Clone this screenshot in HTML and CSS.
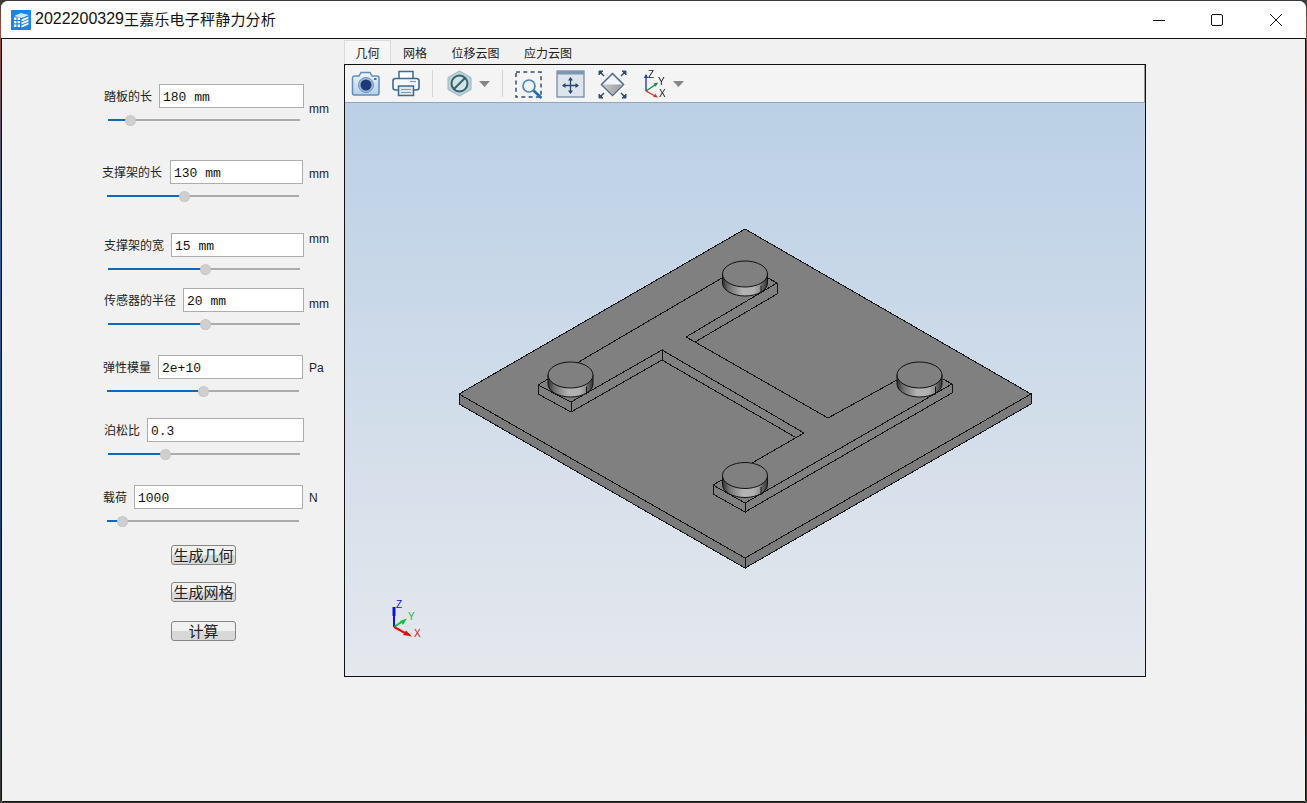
FILE: index.html
```html
<!DOCTYPE html>
<html lang="zh-CN">
<head>
<meta charset="utf-8">
<title>2022200329王嘉乐电子秤静力分析</title>
<link rel="stylesheet" href="styles.css">
</head>
<body>
<div class="window">
  <header class="titlebar">
    <svg class="logo" width="20" height="20" viewBox="0 0 20 20">
      <rect width="20" height="20" fill="#1b84e6"/>
      <path d="M3 6 L10 3 L18 5 L11 8 Z" fill="#cfe6fb"/>
      <path d="M3 7.500 H9 V17 H3 Z" fill="#fff"/>
      <path d="M3 10.500 H9 M3 13.800 H9 M6 7.500 V17" stroke="#1b84e6" stroke-width="1.200" fill="none"/>
      <path d="M10.500 9.500 L17.500 6.500 V8.500 L10.500 11.500 Z M10.500 12.500 L17.500 9.500 V11.500 L10.500 14.500 Z M10.500 15.500 L17.500 12.500 V14.500 L10.500 17.500 Z" fill="#fff"/>
    </svg>
    <h1 class="title"><span class="title-num">2022200329</span><span class="title-cjk">王嘉乐电子秤静力分析</span></h1>
    <div class="controls">
      <div class="ctl"><svg width="14" height="14" viewBox="0 0 14 14"><path d="M1 7.500 H13" stroke="#111" fill="none"/></svg></div>
      <div class="ctl"><svg width="14" height="14" viewBox="0 0 14 14"><rect x="1.500" y="1.500" width="11" height="11" rx="1.500" stroke="#111" fill="none"/></svg></div>
      <div class="ctl"><svg width="14" height="14" viewBox="0 0 14 14"><path d="M1 1 L13 13 M13 1 L1 13" stroke="#111" fill="none"/></svg></div>
    </div>
  </header>

  <main class="main">
    <section class="panel">
      <div class="row r1"><label class="lbl">踏板的长</label><input class="field" value="180 mm"><span class="unit u1">mm</span></div>
      <div class="slider sl-a"><i class="fill" style="width:22px"></i><i class="thumb"></i><i class="rest"></i></div>

      <div class="row r2"><label class="lbl">支撑架的长</label><input class="field" value="130 mm"><span class="unit u2">mm</span></div>
      <div class="slider sl-b"><i class="fill" style="width:77px"></i><i class="thumb"></i><i class="rest"></i></div>

      <div class="row r3"><label class="lbl">支撑架的宽</label><input class="field" value="15 mm"><span class="unit u3">mm</span></div>
      <div class="slider sl-a"><i class="fill" style="width:97px"></i><i class="thumb"></i><i class="rest"></i></div>

      <div class="row r4"><label class="lbl">传感器的半径</label><input class="field" value="20 mm"><span class="unit u4">mm</span></div>
      <div class="slider sl-a"><i class="fill" style="width:97px"></i><i class="thumb"></i><i class="rest"></i></div>

      <div class="row r5"><label class="lbl">弹性模量</label><input class="field" value="2e+10"><span class="unit u5">Pa</span></div>
      <div class="slider sl-b"><i class="fill" style="width:96px"></i><i class="thumb"></i><i class="rest"></i></div>

      <div class="row r6"><label class="lbl">泊松比</label><input class="field" value="0.3"></div>
      <div class="slider sl-a"><i class="fill" style="width:57px"></i><i class="thumb"></i><i class="rest"></i></div>

      <div class="row r7"><label class="lbl">载荷</label><input class="field" value="1000"><span class="unit u5">N</span></div>
      <div class="slider sl-b"><i class="fill" style="width:15px"></i><i class="thumb"></i><i class="rest"></i></div>

      <button class="btn b1">生成几何</button>
      <button class="btn b2">生成网格</button>
      <button class="btn b3">计算</button>
    </section>

    <section class="viewer">
      <nav class="tabs">
        <span class="tab tab-on">几何</span>
        <span class="tab">网格</span>
        <span class="tab">位移云图</span>
        <span class="tab">应力云图</span>
      </nav>
      <div class="pane">
        <div class="toolbar">
          <svg class="ico i-cam" width="30" height="26" viewBox="0 0 30 26">
            <defs><linearGradient id="camg" x1="0" y1="0" x2="0" y2="1"><stop offset="0" stop-color="#eef4fa"/><stop offset="1" stop-color="#b9cfe6"/></linearGradient></defs>
            <path d="M1.500 7 a2 2 0 0 1 2-2 H8 L10 1.500 H19 L21 5 H26 a2 2 0 0 1 2 2 V22 a2 2 0 0 1-2 2 H3.500 a2 2 0 0 1-2-2 Z" fill="url(#camg)" stroke="#5f8dbb" stroke-width="1.500"/>
            <circle cx="15" cy="14" r="7.500" fill="#9dbad8" stroke="#6f95bd"/>
            <circle cx="15" cy="14" r="5.500" fill="#1d3a78"/>
            <rect x="23" y="7" width="2.500" height="2" fill="#49709c"/>
          </svg>
          <svg class="ico i-prn" width="28" height="27" viewBox="0 0 28 27">
            <path d="M7 9 V1.500 H21 V9" fill="#fff" stroke="#3f6a8f" stroke-width="1.500"/>
            <rect x="1" y="8.500" width="26" height="11.500" rx="2.500" fill="#f4f8fb" stroke="#3f6a8f" stroke-width="1.600"/>
            <path d="M18 11.500 H24" stroke="#7f9cb4" stroke-width="1.200"/>
            <rect x="6.500" y="16" width="15" height="9.500" fill="#dfe7ee" stroke="#3f6a8f" stroke-width="1.500"/>
            <path d="M9 19.500 H19 M9 22.500 H19" stroke="#7f9cb4"/>
          </svg>
          <span class="sep"></span>
          <svg class="ico i-no" width="25" height="27" viewBox="0 0 25 27">
            <path d="M12.500 1 L24 7.500 V19.500 L12.500 26 L1 19.500 V7.500 Z" fill="#bdd1d6" stroke="#9ab3ba"/>
            <circle cx="12.500" cy="13.500" r="8" fill="#d5e2e5" stroke="#2f626c" stroke-width="2"/>
            <path d="M7 19 L18 8" stroke="#2f626c" stroke-width="2"/>
          </svg>
          <svg class="ico i-drop1" width="11" height="6" viewBox="0 0 11 6"><path d="M0 0 H11 L5.500 6 Z" fill="#858585"/></svg>
          <span class="sep sep2"></span>
          <svg class="ico i-zoom" width="28" height="28" viewBox="0 0 28 28">
            <rect x="1" y="1" width="25" height="25" fill="none" stroke="#2f4f7c" stroke-width="1.500" stroke-dasharray="4 3.300"/>
            <circle cx="14" cy="15" r="6" fill="#eef4fa" stroke="#4a87bb" stroke-width="1.700"/>
            <path d="M18.500 19.500 L26.500 27" stroke="#1d70b5" stroke-width="2.600"/>
          </svg>
          <svg class="ico i-pan" width="29" height="28" viewBox="0 0 29 28">
            <rect x="1" y="1" width="27" height="26" fill="#dde4ec" stroke="#6a84a2" stroke-width="1.200"/>
            <rect x="1" y="1" width="27" height="3.500" fill="#7d96b1"/>
            <path d="M14.500 8 V23 M7 15.500 H22" stroke="#26466f" stroke-width="1.300"/>
            <path d="M14.500 7 L12 10.500 H17 Z M14.500 24 L12 20.500 H17 Z M6 15.500 L9.500 13 V18 Z M23 15.500 L19.500 13 V18 Z" fill="#26466f"/>
          </svg>
          <svg class="ico i-fit" width="29" height="29" viewBox="0 0 29 29">
            <defs><linearGradient id="fitg" x1="0" y1="0" x2="1" y2="0"><stop offset="0" stop-color="#c8c8c8"/><stop offset="1" stop-color="#9c9c9c"/></linearGradient></defs>
            <path d="M14.500 3.500 L25.500 14.500 L14.500 25.500 L3.500 14.500 Z" fill="#f2f5f8" stroke="#4a6a8d" stroke-width="1.500"/>
            <path d="M5 14.500 H24 L14.500 24.500 Z" fill="url(#fitg)"/>
            <path d="M1 1 L5 1 L1 5 Z M28 1 L24 1 L28 5 Z M1 28 L5 28 L1 24 Z M28 28 L24 28 L28 24 Z" fill="#2c4f7c" stroke="#2c4f7c"/>
            <path d="M2 2 L6 6 M27 2 L23 6 M2 27 L6 23 M27 27 L23 23" stroke="#2c4f7c" stroke-width="1.500"/>
          </svg>
          <svg class="ico i-axes" width="28" height="28" viewBox="0 0 28 28">
            <path d="M5 21 V7" stroke="#1c3fc4" stroke-width="1.400"/>
            <path d="M5 4 L2.800 8 H7.200 Z" fill="#1c3fc4"/>
            <path d="M5 21 L14 15" stroke="#16893c" stroke-width="1.400"/>
            <path d="M17 12.500 L12.500 13.500 L14.800 16.800 Z" fill="#16893c"/>
            <path d="M5 21 L14 26" stroke="#e0282a" stroke-width="1.400"/>
            <path d="M17 27.500 L12.300 27 L14.200 23.700 Z" fill="#e0282a"/>
            <text class="ax-t" x="7" y="8">Z</text>
            <text class="ax-t" x="17" y="15">Y</text>
            <text class="ax-t" x="18" y="27">X</text>
          </svg>
          <svg class="ico i-drop2" width="11" height="6" viewBox="0 0 11 6"><path d="M0 0 H11 L5.500 6 Z" fill="#858585"/></svg>
        </div>
        <div class="view">
          <svg class="scene" width="800" height="573" viewBox="345 103 800 573">
            <defs>
              <linearGradient id="cylg" x1="0" y1="0" x2="1" y2="0">
                <stop offset="0" stop-color="#2f2f2f"/>
                <stop offset=".14" stop-color="#6f6f6f"/>
                <stop offset=".45" stop-color="#b4b4b4"/>
                <stop offset=".7" stop-color="#b0b0b0"/>
                <stop offset=".86" stop-color="#8a8a8a"/>
                <stop offset=".87" stop-color="#6a6a6a"/>
                <stop offset="1" stop-color="#333"/>
              </linearGradient>
              <g id="cyl">
                <path d="M-22.500 0 V9 A22.500 13 0 0 0 22.500 9 V0 Z" fill="url(#cylg)" stroke="#111"/>
                <path d="M16 11.500 V19.500" stroke="#111" fill="none"/>
                <ellipse cx="0" cy="0" rx="22.500" ry="13" fill="#808080" stroke="#111"/>
              </g>
            </defs>
            <g class="edges">
              <path d="M745 229 L1031 394 L745 558 L459 394 Z" fill="#808080"/>
              <path d="M459 394 L745 558 V568 L459 404 Z" fill="#7b7b7b"/>
              <path d="M745 558 L1031 394 V404 L745 568 Z" fill="#7b7b7b"/>
              <path d="M722 278 L577 363"/>
              <path d="M548 379 L538 385 L571 402 L662 350 V360 L571 412 L538 394 V385"/>
              <path d="M571 402 V412"/>
              <path d="M662 350 L804 433 L752 463"/>
              <path d="M662 360 L795 437"/>
              <path d="M722 480 L713 485 L745 503 L952 384 L943 379"/>
              <path d="M713 485 V494 L745 512 V503"/>
              <path d="M745 512 L952 393 V384"/>
              <path d="M768 278 L777 283 V294 L695 342 L686 337 L777 283"/>
              <path d="M695 342 L828 418 L897 380"/>
            </g>
            <use href="#cyl" x="745" y="274"/>
            <use href="#cyl" x="570.500" y="375"/>
            <use href="#cyl" x="919.500" y="375"/>
            <use href="#cyl" x="745" y="475.500"/>
            <g class="triad">
              <path d="M394 627 V610" stroke="#1010e0" stroke-width="2"/>
              <path d="M392.500 607 H395.500 V616 H392.500 Z" fill="#1010e0"/>
              <path d="M394 627 L403 621" stroke="#10c040" stroke-width="2"/>
              <path d="M407 618.500 L400 621 L403 625 Z" fill="#10c040"/>
              <path d="M394 627 L406 633.500" stroke="#e01010" stroke-width="2"/>
              <path d="M412 636.500 L403 635 L406 630.500 Z" fill="#e01010"/>
              <text class="tri-t tz" x="396" y="608">Z</text>
              <text class="tri-t ty" x="408" y="620">Y</text>
              <text class="tri-t tx" x="414" y="637">X</text>
            </g>
          </svg>
        </div>
      </div>
    </section>
  </main>
</div>
</body>
</html>
```

FILE: styles.css
```css
* { box-sizing: border-box; }

html, body { margin: 0; padding: 0; height: 100%; overflow: hidden; }

body {
  background: linear-gradient(180deg, #3a3a3a 0, #a04a3c 3%, #8a4a44 6%, #2c5f98 30%, #1f3f6c 70%, #3a3a30 100%);
  padding: 1px;
  font-family: "Noto Sans CJK SC", "Noto Sans", sans-serif;
  color: #222;
}

.window {
  width: 1305px;
  height: 801px;
  display: flex;
  flex-direction: column;
  border-radius: 7px 7px 2px 2px;
  overflow: hidden;
  background: #f1f1f1;
}

.titlebar {
  flex: none;
  height: 37px;
  background: #fff;
  display: flex;
  align-items: center;
  padding-left: 9px;
  padding-right: 1px;
  border-left: 1px solid #fff;
}

.logo { flex: none; margin-right: 4px; }

.title {
  margin: 0 0 2px;
  font-weight: 400;
  color: #111;
  white-space: nowrap;
  line-height: 20px;
  display: flex;
  align-items: center;
}

.title-num { font-family: "Liberation Sans", sans-serif; font-size: 16px; }
.title-cjk { font-family: "Noto Sans CJK SC", sans-serif; font-size: 15px; letter-spacing: .2px; }

.controls { margin-left: auto; display: flex; }

.ctl {
  width: 58.5px;
  height: 37px;
  display: flex;
  align-items: center;
  justify-content: center;
}

.main {
  flex: 1;
  min-height: 0;
  display: flex;
  border: 1px solid #111;
  background: #f1f1f1;
}

.panel { flex: none; width: 342px; display: flex; flex-direction: column; align-items: flex-start; }

.row {
  display: grid;
  height: 24px;
  grid-template-rows: 24px;
  align-items: center;
  flex: none;
}

.r1 { margin-top: 45px; margin-left: 102px; grid-template-columns: 55px 145px auto; }
.r2 { margin-top: 39px; margin-left: 100px; grid-template-columns: 68px 133px auto; }
.r3 { margin-top: 36px; margin-left: 102px; grid-template-columns: 67px 133px auto; }
.r4 { margin-top: 18px; margin-left: 102px; grid-template-columns: 79px 121px auto; }
.r5 { margin-top: 30px; margin-left: 101px; grid-template-columns: 55px 145px auto; }
.r6 { margin-top: 26px; margin-left: 102px; grid-template-columns: 43px 157px auto; }
.r7 { margin-top: 30px; margin-left: 101px; grid-template-columns: 31px 169px auto; }

.lbl { font-size: 12px; line-height: 16px; color: #222; white-space: nowrap; }

.field {
  width: 100%;
  height: 24px;
  border: 1px solid #adadad;
  background: #fff;
  padding: 2px 0 0 3px;
  margin: 0;
  outline: none;
  border-radius: 0;
  font-family: "Liberation Mono", monospace;
  font-size: 13px;
  color: #111;
}

.unit {
  align-self: start;
  margin-left: 5px;
  font-family: "Liberation Sans", sans-serif;
  font-size: 12px;
  line-height: 14px;
  color: #222;
}

.u1 { margin-top: 18px; }
.u2 { margin-top: 7px; margin-left: 6px; }
.u3 { margin-top: -1px; }
.u4 { margin-top: 9px; }
.u5 { margin-top: 6px; margin-left: 6px; }

.slider {
  flex: none;
  width: 192px;
  height: 2px;
  margin-top: 11px;
  display: flex;
  align-items: center;
}

.sl-a { margin-left: 106px; }
.sl-b { margin-left: 105px; }

.fill { flex: none; height: 2px; background: #1168b8; }
.rest { flex: 1; height: 2px; background: #ababab; }

.thumb {
  flex: none;
  position: relative;
  z-index: 1;
  width: 11px;
  height: 11px;
  margin: 0 -5.5px;
  border-radius: 50%;
  background: #cfcfcf;
  border: 1px dotted #bdbdbd;
}

.btn {
  flex: none;
  width: 65px;
  height: 20px;
  margin-left: 169px;
  padding: 0;
  border: 1px solid #858585;
  border-radius: 3px;
  background: linear-gradient(180deg, #f1f1f1 0, #f1f1f1 52%, #d8d8d8 52%, #d8d8d8 100%);
  font-family: "Noto Sans CJK SC", sans-serif;
  font-size: 15px;
  line-height: 18px;
  color: #222;
}

.b1 { margin-top: 23px; }
.b2 { margin-top: 17px; }
.b3 { margin-top: 19px; }

.viewer { flex: none; width: 802px; height: 638px; display: flex; flex-direction: column; padding-top: 1px; }

.tabs { flex: none; height: 24px; display: flex; font-size: 12px; }

.tab {
  display: flex;
  align-items: center;
  justify-content: center;
  padding-top: 1px;
  line-height: 16px;
  color: #222;
  padding-left: 12px;
  padding-right: 12.5px;
}

.tab-on {
  width: 47px;
  padding-left: 0;
  padding-right: 0;
  background: #f5f5f5;
  border: 1px solid #dadada;
  border-bottom: none;
}

.pane {
  flex: none;
  height: 613px;
  border: 1px solid #111;
  display: flex;
  flex-direction: column;
}

.toolbar {
  flex: none;
  height: 38px;
  display: flex;
  align-items: center;
  padding-left: 6px;
  background: #f4f4f4;
  border-bottom: 1px solid #8fa6c0;
  border-right: 1px solid #9a9a9a;
}

.ico { flex: none; display: block; filter: blur(.35px); }
.i-cam { margin-right: 11px; }
.i-prn { margin-right: 12px; }
.sep { flex: none; width: 1px; height: 27px; background: #d4d4d4; }
.i-no { margin-left: 14px; margin-right: 7px; }
.i-drop1 { margin-right: 12px; }
.sep2 { margin-right: 12px; }
.i-zoom { margin-right: 13px; margin-top: 2px; }
.i-pan { margin-right: 13px; margin-top: 1px; }
.i-fit { margin-right: 14px; margin-top: 1px; }
.i-axes { margin-right: 4px; }

.ax-t { font-family: "Liberation Sans", sans-serif; font-size: 10px; fill: #222; }

.view {
  flex: 1;
  min-height: 0;
  background: linear-gradient(180deg, #bbd0e6 0, #e5e8ed 100%);
}

.scene { display: block; }

.edges path { stroke: #151515; stroke-width: 1; shape-rendering: crispEdges; }
.edges path:not([fill]) { fill: none; }

.tri-t { font-family: "Liberation Sans", sans-serif; font-size: 10px; }
.tz { fill: #1010e0; }
.ty { fill: #10c040; }
.tx { fill: #e01010; }
```
